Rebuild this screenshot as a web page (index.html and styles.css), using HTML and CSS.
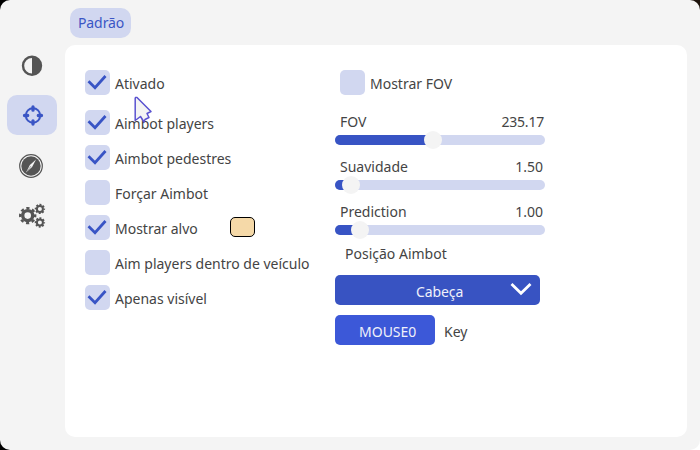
FILE: index.html
```html
<!DOCTYPE html>
<html lang="pt">
<head>
<meta charset="utf-8">
<title>Menu</title>
<link rel="stylesheet" href="styles.css">
</head>
<body>
<div class="window">
  <nav class="sidebar">
    <div class="nav"><svg width="50" height="40" viewBox="0 0 50 40"><circle cx="25" cy="20.700" r="9" fill="none" stroke="#555" stroke-width="2.4"/><path d="M25 12a8.700 8.700 0 0 1 0 17.400z" fill="#555"/></svg></div>
    <div class="nav active"><svg width="50" height="40" viewBox="0 0 50 40"><circle cx="26" cy="20.5" r="7.200" fill="none" stroke="#3a55c5" stroke-width="2"/><path d="M26 12v3.200M26 25.800v3.200M17.500 20.500h3.200M31.300 20.500h3.200" fill="none" stroke="#3a55c5" stroke-width="3.300" stroke-linecap="round"/></svg></div>
    <div class="nav"><svg width="50" height="40" viewBox="0 0 50 40"><circle cx="24" cy="21" r="11.300" fill="none" stroke="#555" stroke-width="1.200"/><circle cx="24" cy="21" r="9.700" fill="#555"/><path d="M29 14.500L25.100 21.900 19 27.500 22.900 20.100z" fill="#f4f4f4"/><path d="M24 21L20.300 26" stroke="#777" stroke-width=".6"/></svg></div>
    <div class="nav"><svg width="50" height="40" viewBox="0 0 50 40" fill="none" stroke="#555"><circle cx="20.700" cy="20.600" r="5" stroke-width="3.400"/><circle cx="20.700" cy="20.600" r="7.500" stroke-width="2.400" stroke-dasharray="3.200 2.690" stroke-dashoffset="1.600"/><circle cx="32.900" cy="13.900" r="3" stroke-width="2"/><circle cx="32.900" cy="13.900" r="4.300" stroke-width="1.800" stroke-dasharray="1.900 1.477" stroke-dashoffset=".95"/><circle cx="32.900" cy="27.500" r="3" stroke-width="2"/><circle cx="32.900" cy="27.500" r="4.300" stroke-width="1.800" stroke-dasharray="1.900 1.477" stroke-dashoffset=".95"/></svg></div>
  </nav>
  <main class="main">
    <div class="tab">Padrão</div>
    <section class="panel">
      <div class="options">
        <div class="check first"><span class="box"><svg viewBox="0 0 25 25"><path d="M3.500 11.200L10 17.700 20.500 6"/></svg></span><span class="label">Ativado</span></div>
        <div class="check"><span class="box"><svg viewBox="0 0 25 25"><path d="M3.500 11.200L10 17.700 20.500 6"/></svg></span><span class="label">Aimbot players</span></div>
        <div class="check"><span class="box"><svg viewBox="0 0 25 25"><path d="M3.500 11.200L10 17.700 20.500 6"/></svg></span><span class="label">Aimbot pedestres</span></div>
        <div class="check"><span class="box"></span><span class="label">Forçar Aimbot</span></div>
        <div class="check"><span class="box"><svg viewBox="0 0 25 25"><path d="M3.500 11.200L10 17.700 20.500 6"/></svg></span><span class="label">Mostrar alvo</span><span class="swatch"></span></div>
        <div class="check"><span class="box"></span><span class="label">Aim players dentro de veículo</span></div>
        <div class="check"><span class="box"><svg viewBox="0 0 25 25"><path d="M3.500 11.200L10 17.700 20.500 6"/></svg></span><span class="label">Apenas visível</span></div>
      </div>
      <div class="settings">
        <div class="check fov"><span class="box"></span><span class="label">Mostrar FOV</span></div>
        <div class="slider">
          <div class="caption"><span>FOV</span><span class="wide">235.17</span></div>
          <div class="track"><div class="fill" style="width:98px"><span class="thumb"></span></div></div>
        </div>
        <div class="slider">
          <div class="caption"><span>Suavidade</span><span>1.50</span></div>
          <div class="track"><div class="fill" style="width:16px"><span class="thumb"></span></div></div>
        </div>
        <div class="slider">
          <div class="caption"><span>Prediction</span><span>1.00</span></div>
          <div class="track"><div class="fill" style="width:25px"><span class="thumb"></span></div></div>
        </div>
        <div class="heading">Posição Aimbot</div>
        <div class="select"><span class="choice">Cabeça</span><svg width="22" height="14" viewBox="0 0 22 14"><path d="M1.500 2L11 11.200 20.500 2" fill="none" stroke="#fff" stroke-width="2.800"/></svg></div>
        <div class="keyrow"><div class="key">MOUSE0</div><span class="keylabel">Key</span></div>
      </div>
    </section>
  </main>
  <svg class="cursor" width="20" height="28" viewBox="0 0 20 28"><path d="M2.200 2.500Q2.200 1 4 1.500L18 15.500 14 17.500 16 21.500 12 23.500 11 26 7.500 20.500 2.200 24.500z" fill="#f4f4f4" stroke="#5a52d0" stroke-width="1.500" stroke-linejoin="round"/></svg>
</div>
</body>
</html>
```
FILE: styles.css
```css
* { box-sizing: border-box; }
body {
  margin: 0;
  background: linear-gradient(#000, #000) left / 50% 100% no-repeat, linear-gradient(#1c120b 50%, #fff 50%);
  height: 450px;
  overflow: hidden;
  font: 14px/20px "Noto Sans", "Open Sans", sans-serif;
  color: #444;
  white-space: nowrap;
}
.window {
  position: relative;
  display: flex;
  width: 700px;
  height: 450px;
  background: #f4f4f4;
  border-radius: 10px;
}
.sidebar {
  width: 65px;
  padding: 45px 0 0 7px;
  display: flex;
  flex-direction: column;
  gap: 10px;
}
.nav { width: 50px; height: 40px; border-radius: 10px; }
.nav svg { display: block; }
.active { background: #d1d7f0; }
.main { width: 622px; padding-top: 8px; }
.tab {
  width: 61px;
  height: 30px;
  margin: 0 0 7px 5px;
  padding: 5px 0 0 8px;
  border-radius: 10px;
  background: #d1d7f0;
  color: #3a55c5;
  letter-spacing: -0.1px;
}
.panel {
  display: flex;
  height: 392px;
  padding: 25px 0 0 20px;
  border-radius: 10px;
  background: #fff;
}
.options {
  width: 250px;
  display: flex;
  flex-direction: column;
  gap: 10px;
}
.check { display: flex; height: 25px; }
.first { margin-bottom: 5px; }
.box { width: 25px; height: 25px; border-radius: 5px; background: #d1d7f0; }
.box svg { display: block; fill: none; stroke: #3854c5; stroke-width: 2.8; }
.label { margin-left: 5px; padding-top: 4px; }
.swatch {
  width: 25px;
  height: 20px;
  margin: 2px 80px 0 auto;
  border: 1px solid #000;
  border-radius: 5px;
  background: #f5d9a8;
}
.settings { width: 210px; }
.fov { margin: 0 0 17px 5px; }
.slider { height: 45px; }
.caption { display: flex; justify-content: space-between; height: 23px; padding: 0 2px 0 5px; }
.wide { letter-spacing: -0.2px; margin-right: -1px; }
.track { height: 10px; border-radius: 5px; background: #d1d7f0; }
.fill {
  display: flex;
  align-items: center;
  justify-content: flex-end;
  height: 10px;
  border-radius: 5px;
  background: #3854c4;
}
.thumb { flex: none; width: 18px; height: 18px; margin-right: -9px; border-radius: 50%; background: #f4f4f4; }
.heading { height: 31px; margin-left: 10px; margin-top: -3px; }
.select {
  display: flex;
  justify-content: space-between;
  width: 205px;
  height: 30px;
  margin-bottom: 10px;
  padding: 0 8px 0 81px;
  border-radius: 5px;
  background: #3853c2;
  color: #f0f1fa;
}
.select svg { margin-top: 7px; }
.choice { padding-top: 7px; letter-spacing: -0.1px; }
.keyrow { display: flex; }
.key {
  width: 100px;
  height: 30px;
  padding: 7px 0 0 24px;
  border-radius: 5px;
  background: #3c58d8;
  color: #f0f1fa;
}
.keylabel { padding: 7px 0 0 9px; }
.cursor { position: absolute; left: 133px; top: 96px; }
```
